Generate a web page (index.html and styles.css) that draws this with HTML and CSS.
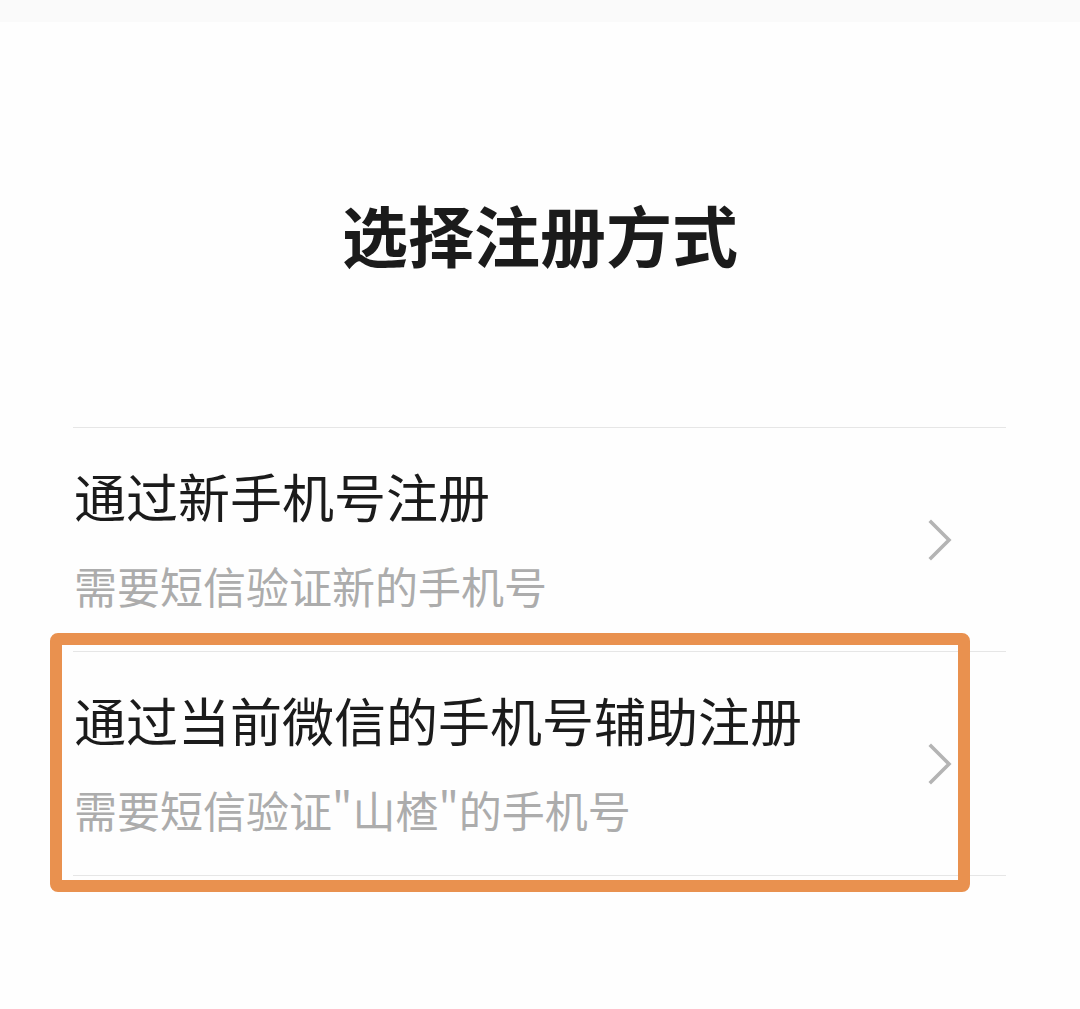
FILE: index.html
```html
<!DOCTYPE html>
<html lang="zh-CN">
<head>
<meta charset="utf-8">
<title>选择注册方式</title>
<link rel="stylesheet" href="styles.css">
</head>
<body>
<div class="status-strip"></div>
<header class="header">
  <h1 class="title">选择注册方式</h1>
</header>
<ul class="options">
  <li class="option">
    <div class="option-text">
      <div class="option-title">通过新手机号注册</div>
      <div class="option-sub">需要短信验证新的手机号</div>
    </div>
    <svg class="chevron" width="26" height="42" viewBox="0 0 26 42" aria-hidden="true">
      <polyline points="3,3 21,21 3,39" fill="none" stroke="#b4b4b4" stroke-width="3.6" stroke-linecap="square" stroke-linejoin="miter"/>
    </svg>
  </li>
  <li class="option option-highlight">
    <div class="option-text">
      <div class="option-title">通过当前微信的手机号辅助注册</div>
      <div class="option-sub">需要短信验证"山楂"的手机号</div>
    </div>
    <svg class="chevron" width="26" height="42" viewBox="0 0 26 42" aria-hidden="true">
      <polyline points="3,3 21,21 3,39" fill="none" stroke="#b4b4b4" stroke-width="3.6" stroke-linecap="square" stroke-linejoin="miter"/>
    </svg>
    <div class="highlight-frame"></div>
  </li>
</ul>
</body>
</html>
```

FILE: styles.css
```css
html, body {
  margin: 0;
  padding: 0;
  background: #fefefe;
}

body {
  width: 1080px;
  height: 1009px;
  overflow: hidden;
  font-family: "Noto Sans CJK SC", "Noto Sans", sans-serif;
}

.status-strip {
  height: 22px;
  background: #fafafa;
}

.header {
  height: 405px;
  box-sizing: border-box;
  padding-top: 171px;
  display: flex;
  justify-content: center;
}

.title {
  margin: 0;
  font-size: 66px;
  line-height: 80px;
  font-weight: 700;
  color: #1b1b1b;
  letter-spacing: 0;
}

.options {
  list-style: none;
  margin: 0 74px 0 73px;
  padding: 0;
  border-top: 1px solid #e6e6e6;
}

.option {
  position: relative;
  display: flex;
  align-items: center;
  justify-content: space-between;
  height: 224px;
  box-sizing: border-box;
  padding: 0 52px 0 1px;
  border-bottom: 1px solid #e6e6e6;
}

.option-text {
  display: flex;
  flex-direction: column;
  padding-bottom: 2px;
}

.option-title {
  font-size: 52px;
  line-height: 60px;
  color: #1b1b1b;
}

.option-sub {
  margin-top: 33px;
  font-size: 43px;
  line-height: 52px;
  color: #acacac;
}

.chevron {
  display: block;
  flex: none;
}

.highlight-frame {
  position: absolute;
  top: -19px;
  left: -23px;
  right: 36px;
  bottom: -17px;
  border: 12px solid #e9914f;
  border-radius: 8px;
  pointer-events: none;
}
```
